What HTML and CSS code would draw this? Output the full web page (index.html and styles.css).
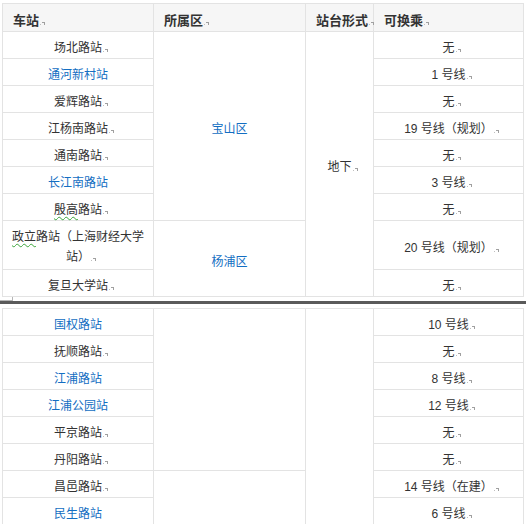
FILE: index.html
```html
<!DOCTYPE html>
<html lang="zh-CN">
<head>
<meta charset="utf-8">
<title>车站</title>
<link rel="stylesheet" href="styles.css">
</head>
<body class="page">
<table class="grid">
  <colgroup><col class="c1"><col class="c2"><col class="c3"><col class="c4"></colgroup>
  <thead>
    <tr><th>车站<i class="m"></i></th><th>所属区<i class="m"></i></th><th>站台形式<i class="m"></i></th><th>可换乘<i class="m"></i></th></tr>
  </thead>
  <tbody>
    <tr><td>场北路站<i class="m"></i></td><td rowspan="7"><span class="link">宝山区</span></td><td rowspan="9">地下<i class="m"></i></td><td>无<i class="m"></i></td></tr>
    <tr><td><span class="link">通河新村站</span></td><td>1 号线<i class="m"></i></td></tr>
    <tr><td>爱辉路站<i class="m"></i></td><td>无<i class="m"></i></td></tr>
    <tr><td>江杨南路站<i class="m"></i></td><td>19 号线（规划）<i class="m"></i></td></tr>
    <tr><td>通南路站<i class="m"></i></td><td>无<i class="m"></i></td></tr>
    <tr><td><span class="link">长江南路站</span></td><td>3 号线<i class="m"></i></td></tr>
    <tr><td><span class="wavy">殷高</span>路站<i class="m"></i></td><td>无<i class="m"></i></td></tr>
    <tr class="tall"><td class="two"><span class="wavy">政立</span>路站（上海财经大学<br>站）<i class="m"></i></td><td rowspan="2"><span class="link">杨浦区</span></td><td>20 号线（规划）<i class="m"></i></td></tr>
    <tr><td>复旦大学站<i class="m"></i></td><td>无<i class="m"></i></td></tr>
  </tbody>
</table>
<div class="sep"><span class="corner"></span><span class="bar"></span></div>
<table class="grid">
  <colgroup><col class="c1"><col class="c2"><col class="c3"><col class="c4"></colgroup>
  <tbody>
    <tr><td><span class="link">国权路站</span></td><td rowspan="6"></td><td rowspan="8"></td><td>10 号线<i class="m"></i></td></tr>
    <tr><td>抚顺路站<i class="m"></i></td><td>无<i class="m"></i></td></tr>
    <tr><td><span class="link">江浦路站</span></td><td>8 号线<i class="m"></i></td></tr>
    <tr><td><span class="link">江浦公园站</span></td><td>12 号线<i class="m"></i></td></tr>
    <tr><td>平京路站<i class="m"></i></td><td>无<i class="m"></i></td></tr>
    <tr><td>丹阳路站<i class="m"></i></td><td>无<i class="m"></i></td></tr>
    <tr><td>昌邑路站<i class="m"></i></td><td rowspan="2"></td><td>14 号线（在建）<i class="m"></i></td></tr>
    <tr><td><span class="link">民生路站</span></td><td>6 号线<i class="m"></i></td></tr>
  </tbody>
</table>
</body>
</html>
```
FILE: styles.css
```css
html, body {
  margin: 0;
  background: #ffffff;
}
.page {
  padding-top: 3px;
  font-family: "Liberation Sans", "Noto Sans CJK SC", sans-serif;
  font-size: 12px;
  color: #333333;
}
.grid {
  table-layout: fixed;
  border-collapse: separate;
  border-spacing: 0;
  width: 522px;
  margin-left: 2px;
  border-top: 1px solid #e3e3e3;
  border-left: 1px solid #e3e3e3;
}
.c1 { width: 151px; }
.c2 { width: 152px; }
.c3 { width: 68px; }
.c4 { width: 150px; }
.grid th,
.grid td {
  border-right: 1px solid #e3e3e3;
  border-bottom: 1px solid #e3e3e3;
  padding: 8px 9px 2px 9px;
  line-height: 16px;
  text-align: center;
  vertical-align: middle;
  white-space: nowrap;
}
.grid th {
  background: #f6f6f6;
  text-align: left;
  font-size: 13px;
  font-weight: bold;
  padding: 9px 9px 2px 10px;
}
.grid .tall {
  height: 49px;
}
.grid td.two {
  line-height: 20px;
  padding-top: 6px;
  padding-bottom: 2px;
}
.link {
  color: #136ec2;
}
.wavy {
  text-decoration: underline wavy #3aa53a;
  text-decoration-thickness: 1px;
  text-underline-offset: 2px;
}
.m {
  display: inline-block;
  position: relative;
  width: 2px;
  height: 2px;
  border-top: 1px solid #a0a0a0;
  border-right: 1px solid #a0a0a0;
  margin-left: 3px;
  margin-right: -6px;
  vertical-align: 0;
}
.m::before {
  content: "";
  position: absolute;
  left: -2px;
  bottom: 0;
  width: 1px;
  height: 1px;
  background: #c0c0c0;
}
.sep {
  display: flex;
  flex-direction: column;
  padding-bottom: 4px;
}
.corner {
  width: 12px;
  height: 3px;
  border-right: 1px solid #b5b5b5;
  border-bottom: 1px solid #b5b5b5;
}
.bar {
  height: 3px;
  background: #5a5a5a;
}
```
